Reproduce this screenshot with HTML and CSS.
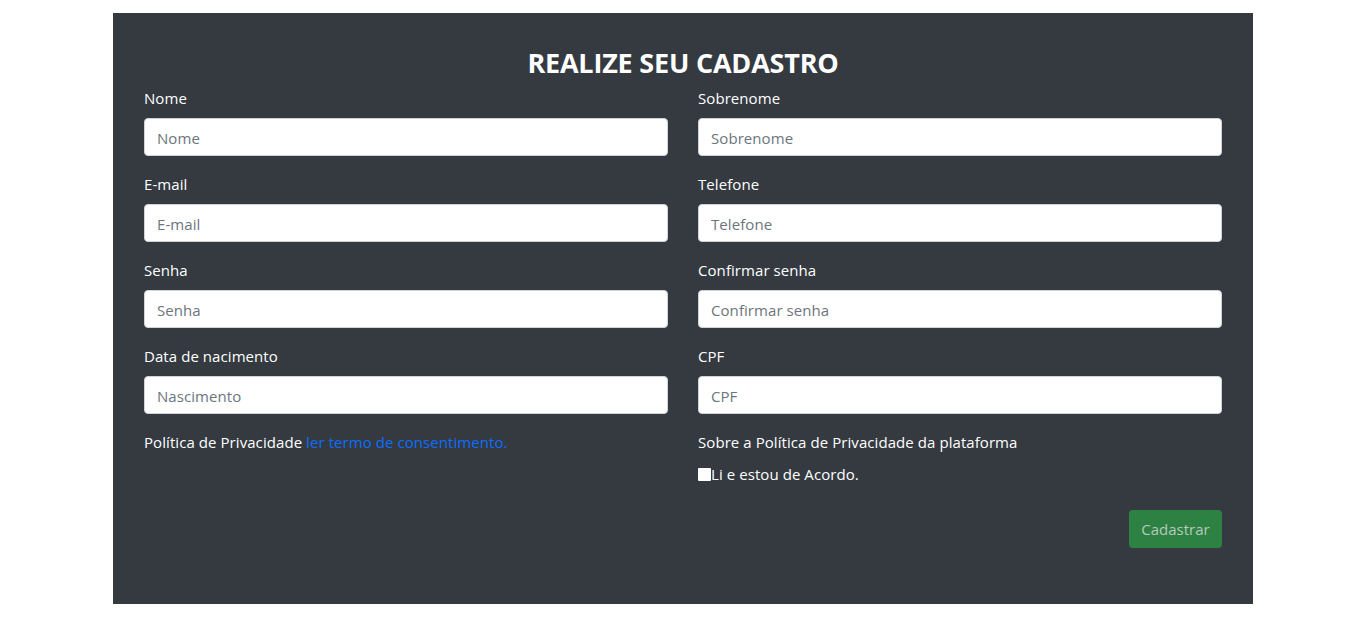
FILE: index.html
```html
<!DOCTYPE html>
<html lang="pt-BR">
<head>
<meta charset="utf-8">
<title>Cadastro</title>
<link rel="stylesheet" href="styles.css">
</head>
<body>
<main class="panel">
  <h2 class="title">REALIZE SEU CADASTRO</h2>
  <form class="grid">
    <div class="field">
      <label>Nome</label>
      <input type="text" placeholder="Nome">
    </div>
    <div class="field">
      <label>Sobrenome</label>
      <input type="text" placeholder="Sobrenome">
    </div>
    <div class="field">
      <label>E-mail</label>
      <input type="text" placeholder="E-mail">
    </div>
    <div class="field">
      <label>Telefone</label>
      <input type="text" placeholder="Telefone">
    </div>
    <div class="field">
      <label>Senha</label>
      <input type="password" placeholder="Senha">
    </div>
    <div class="field">
      <label>Confirmar senha</label>
      <input type="password" placeholder="Confirmar senha">
    </div>
    <div class="field">
      <label>Data de nacimento</label>
      <input type="text" placeholder="Nascimento">
    </div>
    <div class="field">
      <label>CPF</label>
      <input type="text" placeholder="CPF">
    </div>
    <div class="field">
      <p class="text">Política de Privacidade <a href="#" class="link">ler termo de consentimento.</a></p>
    </div>
    <div class="field">
      <p class="text">Sobre a Política de Privacidade da plataforma</p>
      <label class="check"><span class="box"></span>Li e estou de Acordo.</label>
    </div>
    <div class="actions">
      <button type="button" class="btn">Cadastrar</button>
    </div>
  </form>
</main>
</body>
</html>
```
FILE: styles.css
```css
* { box-sizing: border-box; }
html, body { margin: 0; padding: 0; background: #fff; }
body {
  font-family: "Open Sans", "Noto Sans", sans-serif;
  font-size: 15px;
  letter-spacing: 0.07px;
  color: #fff;
  padding-top: 13px;
}
.panel {
  width: 1140px;
  margin: 0 auto;
  background: #343a40;
  padding: 33px 31px 56px;
  height: 591px;
}
.title {
  margin: 0 0 6px;
  text-align: center;
  font-size: 27px;
  font-weight: 700;
  line-height: 34px;
  letter-spacing: -0.2px;
}
.grid {
  display: grid;
  grid-template-columns: 1fr 1fr;
  column-gap: 30px;
  row-gap: 16px;
}
.field { display: flex; flex-direction: column; }
.field label {
  line-height: 24px;
  margin-bottom: 8px;
}
.field input {
  height: 38px;
  border: 1px solid #ced4da;
  border-radius: 4px;
  background: #fff;
  padding: 1px 12px 0;
  font: inherit;
  letter-spacing: 0.07px;
  color: #495057;
}
.field input::placeholder { color: #6c757d; }
.text { margin: 0; line-height: 24px; }
.link { color: #0d6efd; text-decoration: none; }
.check {
  display: flex;
  align-items: center;
  margin: 8px 0 0;
}
.box {
  width: 13px;
  height: 13px;
  background: #fff;
  border-radius: 1px;
  margin: 1px 0 0;
}
.actions {
  grid-column: 1 / -1;
  display: flex;
  justify-content: flex-end;
  margin-top: 0;
}
.btn {
  height: 38px;
  width: 93px;
  border: 0;
  border-radius: 4px;
  background: #2c8143;
  color: #b8c9bd;
  font: inherit;
  padding: 0;
}
```
